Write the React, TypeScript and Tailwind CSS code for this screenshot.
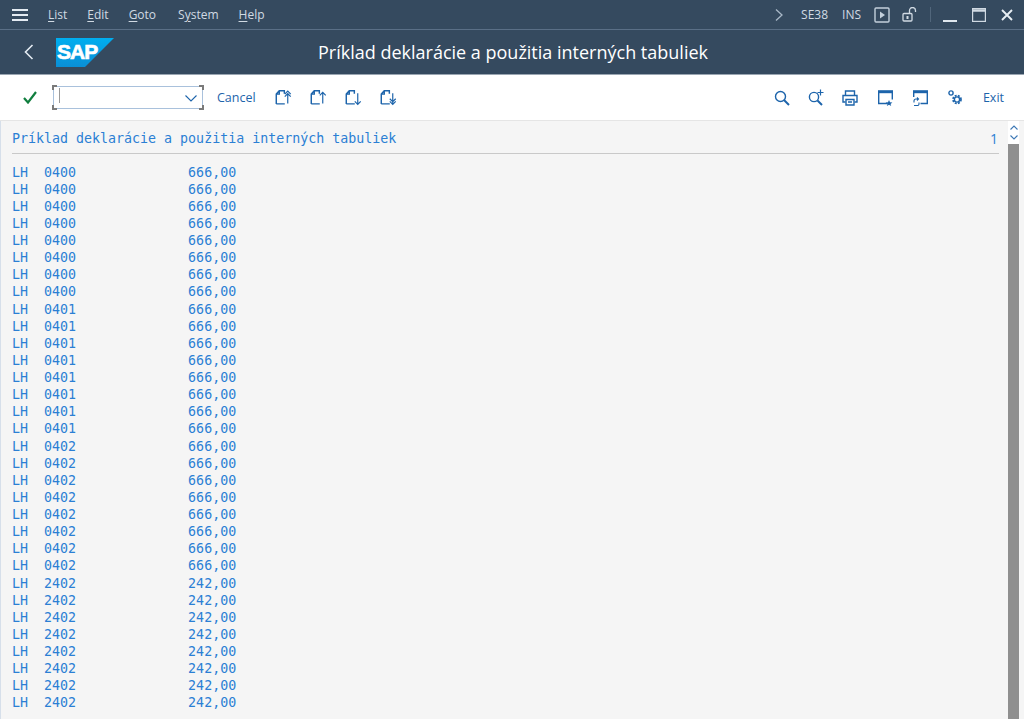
import React from "react";

const rows: [string, string][] = [
  ...Array(8).fill(["0400", "666,00"]),
  ...Array(8).fill(["0401", "666,00"]),
  ...Array(8).fill(["0402", "666,00"]),
  ...Array(8).fill(["2402", "242,00"]),
];

const B = "#1d64ab";

function Svg({ children, w = 20, h = 20, s, c = B }: { children: React.ReactNode; w?: number; h?: number; s?: number; c?: string }) {
  return (
    <svg width={s ?? w} height={s ?? h} viewBox={`0 0 ${w} ${h}`} fill="none" stroke={c} strokeWidth={1.4} className="shrink-0">
      {children}
    </svg>
  );
}

const Page = () => <path d="M1.5 17.5V6l3.5-4h6v3.5M1.5 17.5h10M5 2v4H1.5" strokeWidth={1.7} />;

function Menu({ a, rest }: { a: string; rest: string }) {
  return (
    <span>
      <span className="underline underline-offset-2 decoration-1">{a}</span>
      {rest}
    </span>
  );
}

export default function App() {
  return (
    <div className="w-[1024px] h-[719px] overflow-hidden flex flex-col bg-[#f5f5f5] font-['Open_Sans','Noto_Sans',sans-serif]">
      {/* Menu bar */}
      <div className="h-[30px] shrink-0 bg-[#354a5f] border-b border-[#5a6f86] flex items-center text-[#d1dae3] text-[12px]">
        <svg width="16" height="12" viewBox="0 0 16 12" className="ml-3" stroke="#e4ebf2" strokeWidth="2">
          <path d="M0 1h16M0 6h16M0 11h16" />
        </svg>
        <div className="ml-[20px] flex gap-[20px]">
          <Menu a="L" rest="ist" />
          <Menu a="E" rest="dit" />
          <Menu a="G" rest="oto" />
          <span className="ml-[2px]">
            S<span className="underline underline-offset-2 decoration-1">y</span>stem
          </span>
          <Menu a="H" rest="elp" />
        </div>
        <div className="ml-auto flex items-center">
          <svg width="8" height="12" viewBox="0 0 8 12" fill="none" stroke="#a9b8c7" strokeWidth="1.3">
            <path d="M1 0.5l6 5.5-6 5.5" />
          </svg>
          <span className="ml-[18px]">SE38</span>
          <span className="ml-[14px]">INS</span>
          <svg width="16" height="16" viewBox="0 0 16 16" fill="none" stroke="#c3d0dc" strokeWidth="1.4" className="ml-[13px]">
            <rect x="1" y="1" width="14" height="14" rx="1" />
            <path d="M6 4.5l5 3.5-5 3.5z" fill="#c3d0dc" stroke="none" />
          </svg>
          <svg width="16" height="15" viewBox="0 0 16 15" fill="none" stroke="#d1dae3" strokeWidth="1.3" className="ml-[12px]">
            <rect x="1" y="6.5" width="9" height="7.5" rx="1" />
            <path d="M5.5 9v3" strokeWidth="2" />
            <path d="M7.5 6.5V3.5a3 3 0 0 1 6 0V5" />
          </svg>
          <div className="ml-[12px] w-px h-[15px] bg-[#51667b]" />
          <div className="ml-[12px] w-[14px] h-[2px] bg-[#dfe7ee] mt-[13px]" />
          <svg width="14" height="14" viewBox="0 0 14 14" fill="none" stroke="#d1dae3" strokeWidth="1.2" className="ml-[15px]">
            <rect x="0.6" y="0.6" width="12.8" height="12.8" />
            <path d="M0.6 2.5h12.8" strokeWidth="2.5" />
          </svg>
          <svg width="12" height="12" viewBox="0 0 12 12" stroke="#e8eef3" strokeWidth="1.9" className="ml-[15px] mr-[11px]">
            <path d="M1 1l10 10M11 1L1 11" />
          </svg>
        </div>
      </div>

      {/* Title bar */}
      <div className="h-[45px] shrink-0 bg-[#354a5f] relative flex items-center border-b border-[#9aa6b2]">
        <svg width="10" height="16" viewBox="0 0 10 16" fill="none" stroke="#e4ebf2" strokeWidth="1.6" className="ml-[24px]">
          <path d="M8.5 1L1.5 8l7 7" />
        </svg>
        <svg width="58" height="29" viewBox="0 0 58 29" className="ml-[22px]">
          <defs>
            <linearGradient id="sapg" x1="0" y1="0" x2="0" y2="1">
              <stop offset="0" stopColor="#00aeef" />
              <stop offset="1" stopColor="#0a8fd6" />
            </linearGradient>
          </defs>
          <path d="M0 0h58L29 29H0z" fill="url(#sapg)" />
          <text x="1" y="21" fontFamily="'Liberation Sans',sans-serif" fontWeight="700" fontSize="21" letterSpacing="-1" fill="#fff" stroke="#fff" strokeWidth="0.7">
            SAP
          </text>
        </svg>
        <div className="absolute left-0 right-0 top-[9px] text-center text-white text-[18px] leading-[26px] pl-[2px]">
          Príklad deklarácie a použitia interných tabuliek
        </div>
      </div>

      {/* Toolbar */}
      <div className="h-[46px] shrink-0 bg-white border-b border-[#e5e5e5] flex items-center text-[#1d64ab] text-[12.5px]">
        <svg width="14" height="13" viewBox="0 0 14 13" fill="none" stroke="#107e3e" strokeWidth="2.2" className="ml-[23px]">
          <path d="M1 7l4 4.5L13 1" />
        </svg>
        <div className="ml-[16px] relative w-[150px] h-[23px] border border-[#a9c1dc] bg-white rounded-[1px] flex items-center">
          <div className="absolute left-[5px] top-[1px] w-px h-[15px] bg-[#9a9a9a]" />
          <svg width="12" height="7" viewBox="0 0 12 7" fill="none" stroke="#1d64ab" strokeWidth="1.1" className="ml-auto mr-[5px] mt-[2px]">
            <path d="M0.5 0.5L6 6l5.5-5.5" />
          </svg>
          <div className="absolute -left-[2px] -top-[2px] w-[5px] h-[5px] border-l-2 border-t-2 border-[#7a7a7a]" />
          <div className="absolute -right-[2px] -top-[2px] w-[5px] h-[5px] border-r-2 border-t-2 border-[#7a7a7a]" />
          <div className="absolute -left-[2px] -bottom-[2px] w-[5px] h-[5px] border-l-2 border-b-2 border-[#7a7a7a]" />
          <div className="absolute -right-[2px] -bottom-[2px] w-[5px] h-[5px] border-r-2 border-b-2 border-[#7a7a7a]" />
        </div>
        <span className="ml-[14px] mt-[2px]">Cancel</span>
        <div className="ml-[19px]">
          <Svg s={17}>
            <Page />
            <path d="M15 17V6M11.5 9L15 5.5 18.5 9M11.5 6L15 2.5 18.5 6" />
          </Svg>
        </div>
        <div className="ml-[18px]">
          <Svg s={17}>
            <Page />
            <path d="M15 17V4M11.5 7.5L15 4l3.5 3.5" />
          </Svg>
        </div>
        <div className="ml-[18px]">
          <Svg s={17}>
            <Page />
            <path d="M15 5v13M11.5 14.5L15 18l3.5-3.5" />
          </Svg>
        </div>
        <div className="ml-[18px]">
          <Svg s={17}>
            <Page />
            <path d="M15 5v13M11.5 11.5L15 15l3.5-3.5M11.5 14.5L15 18l3.5-3.5" />
          </Svg>
        </div>

        <div className="ml-auto flex items-center">
          <Svg w={16} h={16}>
            <circle cx="6.5" cy="6.5" r="5" />
            <path d="M10 10l5 5" strokeWidth={2} />
          </Svg>
          <div className="ml-[18px]">
            <Svg w={16} h={17}>
              <circle cx="6" cy="8" r="4.6" />
              <path d="M9.5 11.5l4.5 4.5" strokeWidth={2} />
              <path d="M12.5 0.5v6M9.5 3.5h6" strokeWidth={1.2} />
            </Svg>
          </div>
          <div className="ml-[18px]">
            <Svg w={16} h={16}>
              <path d="M3.5 5V1h9v4M3.5 12H1V5.5h14V12h-2.5" />
              <path d="M4 9.5h8V15H4zM6 12h4" />
            </Svg>
          </div>
          <div className="ml-[20px]">
            <Svg w={15} h={16}>
              <path d="M0.7 2v11.5H9M14.3 2v7.5" />
              <path d="M0 1.7h15" strokeWidth={3} />
              <path d="M11 10l1 2.2 2.4.2-1.8 1.5.6 2.1-2.2-1.2-2.2 1.2.6-2.1-1.8-1.5 2.4-.2z" fill={B} stroke="none" />
            </Svg>
          </div>
          <div className="ml-[20px]">
            <Svg w={15} h={16}>
              <path d="M0.7 2v5M14.3 2v11.5H7.5" />
              <path d="M0 1.7h15" strokeWidth={3} />
              <path d="M1 12.5V11a2 2 0 0 1 2-2h2.5M4 7.5L5.5 9 4 10.5M6 12.5V14a1.5 1.5 0 0 1-1.5 1.5H1" strokeWidth={1.1} />
            </Svg>
          </div>
          <div className="ml-[20px]">
            <Svg w={14} h={15}>
              <circle cx="3" cy="3" r="2.1" />
              <circle cx="9" cy="9.5" r="2.6" />
              <circle cx="9" cy="9.5" r="4" strokeDasharray="2 1.2" strokeWidth={1.7} />
            </Svg>
          </div>
          <span className="ml-[21px] mr-[20px] mt-[2px]">Exit</span>
        </div>
      </div>

      {/* List */}
      <div className="flex-1 min-h-0 flex font-['DejaVu_Sans_Mono',monospace] text-[#2b7fd4] text-[13.3px] leading-[17px]">
        <div className="w-[999px] pl-3 shrink-0 border-l border-[#d6dfea]">
          <div className="h-[33px] pt-[9px] flex justify-between border-b border-[#c9c9c9] -ml-px pr-[1px]">
            <span className="whitespace-pre">Príklad deklarácie a použitia interných tabuliek</span>
            <span className="font-['Open_Sans',sans-serif] text-[14px]">1</span>
          </div>
          <div className="pt-[9.55px] -ml-px">
            {rows.map(([code, val], i) => (
              <div key={i} className="whitespace-pre h-[17.125px]">
                {"LH  " + code + "              " + val}
              </div>
            ))}
          </div>
        </div>
        <div className="ml-[9px] w-[11px] shrink-0 flex flex-col">
          <div className="h-[23px] bg-white flex flex-col items-center justify-center gap-[5px]">
            <svg width="8" height="5" viewBox="0 0 8 5" fill="none" stroke="#3d78b5" strokeWidth="1.1">
              <path d="M0.5 4.5L4 1l3.5 3.5" />
            </svg>
            <svg width="8" height="5" viewBox="0 0 8 5" fill="none" stroke="#3d78b5" strokeWidth="1.1">
              <path d="M0.5 0.5L4 4l3.5-3.5" />
            </svg>
          </div>
          <div className="flex-1 bg-[#8f8f8f]" />
        </div>
      </div>
    </div>
  );
}
